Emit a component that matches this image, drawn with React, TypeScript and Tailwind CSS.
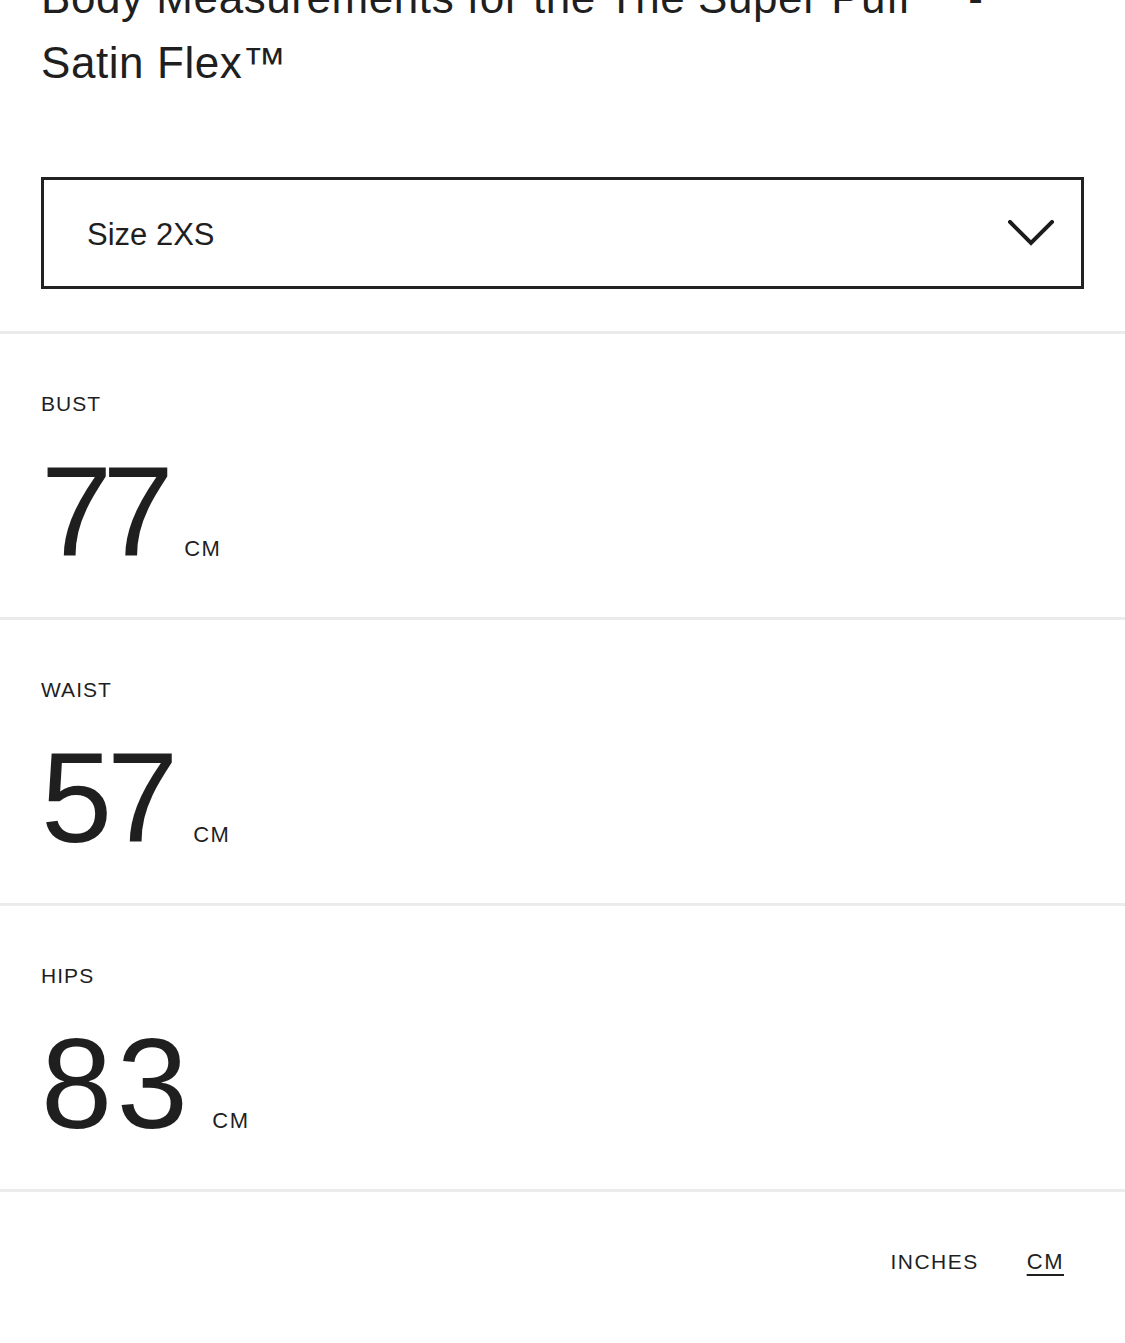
const rows = [
  { label: "BUST", value: "77", num: "tracking-[-0.075em]" },
  { label: "WAIST", value: "57", num: "tracking-[-0.04em]" },
  { label: "HIPS", value: "83", num: "tracking-[0.035em]" },
];

function Chevron() {
  return (
    <svg width="46" height="26" viewBox="0 0 46 26" fill="none" className="shrink-0">
      <polyline points="2,2 23,23 44,2" stroke="#1c1c1c" strokeWidth="4" strokeLinecap="square" />
    </svg>
  );
}

export default function App() {
  return (
    <div className="min-h-screen overflow-hidden bg-white text-[#1f1f1f] font-['Liberation_Sans',Arial,sans-serif]">
      <div className="px-[41px]">
        <h1 className="-mt-[35px] text-[44px] leading-[65px] font-normal tracking-[0.013em]">
          Body Measurements for the The Super Puff™ -<br />
          Satin Flex™
        </h1>

        <button className="mt-[82px] w-full h-[112px] border-[3px] border-[#222] flex items-center justify-between pl-[43px] pr-[27px] bg-white">
          <span className="text-[31px] pt-[4px]">Size 2XS</span>
          <Chevron />
        </button>
      </div>

      <div className="mt-[42px]">
        {rows.map((r) => (
          <section key={r.label} className="border-t-[3px] border-[#ebebeb] px-[41px] pt-[58px] pb-[41px]">
            <div className="text-[21px] leading-[24px] tracking-[0.05em]">{r.label}</div>
            <div className="mt-[32px] flex items-baseline gap-[20px]">
              <span className={`text-[128px] leading-none ${r.num}`}>{r.value}</span>
              <span className="text-[22px] tracking-[0.07em]">CM</span>
            </div>
          </section>
        ))}
        <div className="border-t-[3px] border-[#ebebeb] flex justify-end items-center gap-[48px] pr-[61px] pt-[58px] pb-[60px] text-[21px] leading-[24px]">
          <span className="tracking-[0.07em]">INCHES</span>
          <span className="text-[22px] tracking-[0.07em] underline decoration-2 underline-offset-[5px]">CM</span>
        </div>
      </div>
    </div>
  );
}
